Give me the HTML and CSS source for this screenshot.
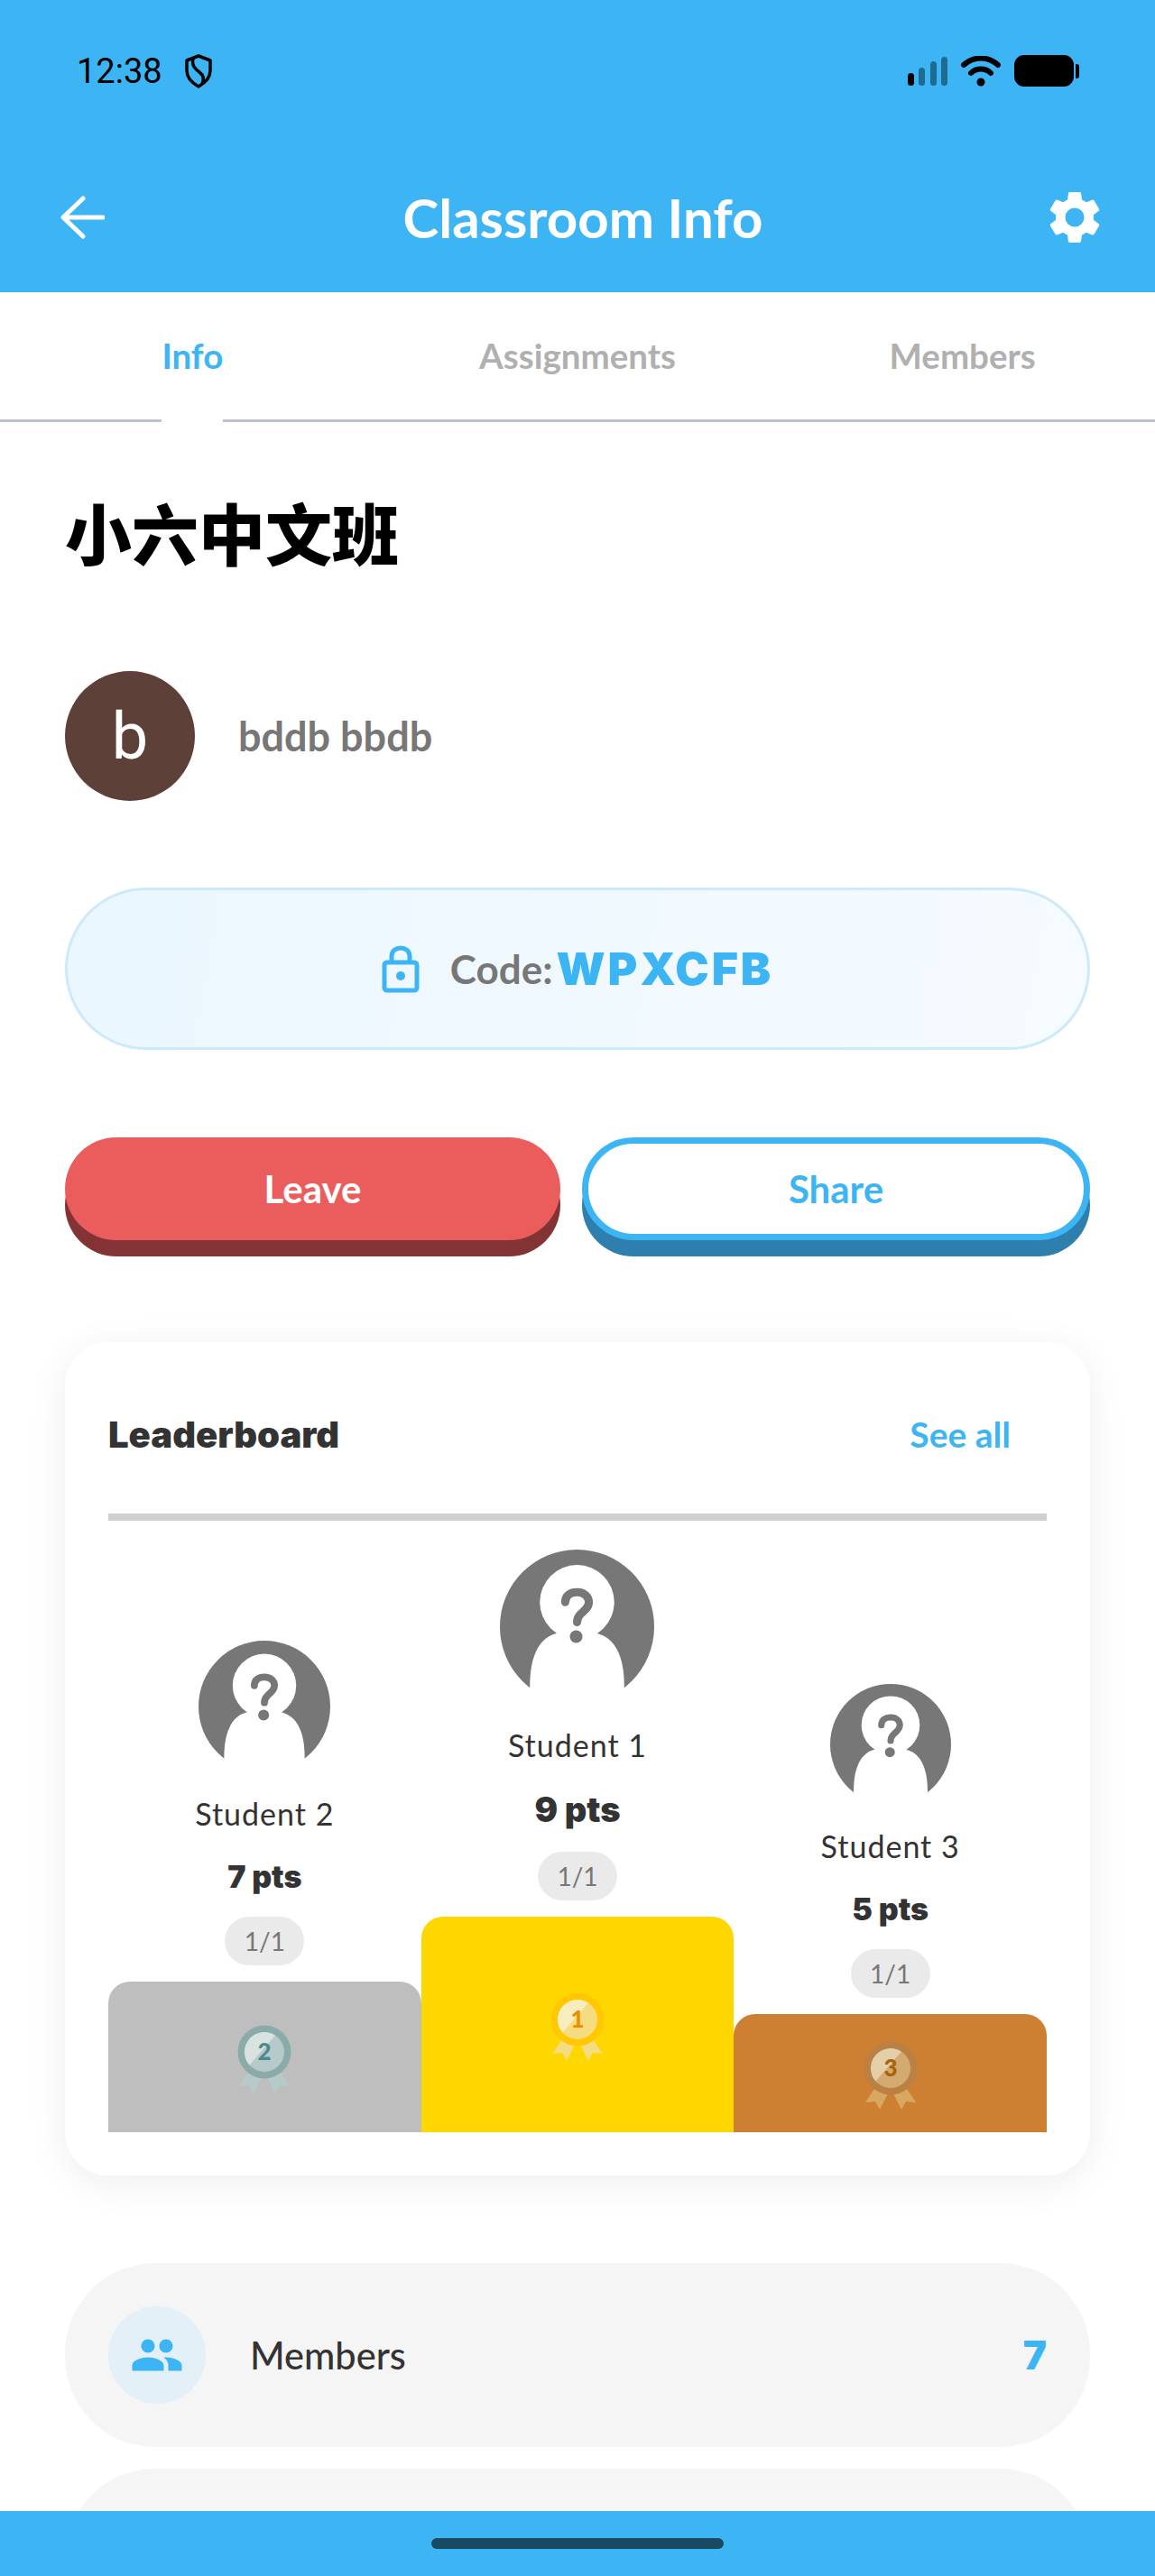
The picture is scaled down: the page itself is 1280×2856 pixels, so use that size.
FILE: index.html

```html
<!DOCTYPE html>
<html lang="en">
<head>
<meta charset="utf-8"/>
<meta content="width=device-width, initial-scale=1.0" name="viewport"/>
<title>Classroom Info</title>
<link rel="stylesheet" href="styles.css">
</head>
<body>
<svg class="defs" width="0" height="0" aria-hidden="true">
  <defs>
    <clipPath id="medalLight"><polygon points="0,60 52,0 0,0"/></clipPath>
    <symbol id="unknownUser" viewBox="0 0 170 170">
      <circle cx="85" cy="85" r="85" fill="#777"/>
      <circle cx="85" cy="58" r="41" fill="#fff"/>
      <path d="M64 92C44 96 33 116 33 151L33 172L137 172L137 151C137 116 126 96 105 92Z" fill="#fff"/>
      <path d="M72 58C72 50 78 47 85 47C93 47 98 52 98 58C98 64 93 67 89 71C86 74 85 76 85 80" fill="none" stroke="#777" stroke-width="9" stroke-linecap="round"/>
      <circle cx="84" cy="96" r="7" fill="#777"/>
    </symbol>
  </defs>
</svg>

<div class="app">
  <header class="top">
    <div class="status">
      <div class="status-left">
        <span class="clock">12:38</span>
        <svg width="32" height="38" viewBox="0 0 32 38"><path d="M16 2L29 7V18C29 26 23 32 16 36C9 32 3 26 3 18V7Z" fill="none" stroke="#000" stroke-width="3.5" stroke-linejoin="round"/><path d="M10 5C8 13 13 17 17 20C21 23 23 27 20 33" fill="none" stroke="#000" stroke-width="3.5"/></svg>
      </div>
      <div class="status-right">
        <div class="signal">
          <span class="bar bar1"></span><span class="bar bar2"></span><span class="bar bar3"></span><span class="bar bar4"></span>
        </div>
        <svg width="44" height="34" viewBox="0 0 44 34"><path d="M3 10C14 0 30 0 41 10" fill="none" stroke="#000" stroke-width="6" stroke-linecap="round"/><path d="M11 19C17 13 27 13 33 19" fill="none" stroke="#000" stroke-width="6" stroke-linecap="round"/><circle cx="22" cy="29" r="4.5" fill="#000"/></svg>
        <div class="battery"><span class="battery-body"></span><span class="battery-tip"></span></div>
      </div>
    </div>
    <div class="nav">
      <svg class="nav-back" width="50" height="48" viewBox="0 0 50 48"><path d="M26 3L4 24L26 45M5 24H48" fill="none" stroke="#fff" stroke-width="5" stroke-linecap="round" stroke-linejoin="round"/></svg>
      <h2>Classroom Info</h2>
      <svg class="nav-gear" width="70" height="70" viewBox="0 0 24 24"><path fill="#fff" d="M19.14 12.94c.04-.3.06-.61.06-.94 0-.32-.02-.64-.07-.94l2.03-1.58a.49.49 0 0 0 .12-.61l-1.92-3.32a.49.49 0 0 0-.59-.22l-2.39.96a7 7 0 0 0-1.62-.94l-.36-2.54a.48.48 0 0 0-.48-.41h-3.84a.48.48 0 0 0-.47.41l-.36 2.54c-.59.24-1.13.57-1.62.94l-2.39-.96a.49.49 0 0 0-.59.22L2.74 8.87a.48.48 0 0 0 .12.61l2.03 1.58c-.05.3-.09.63-.09.94s.02.64.07.94l-2.03 1.58a.49.49 0 0 0-.12.61l1.92 3.32c.12.22.37.29.59.22l2.39-.96c.5.38 1.03.7 1.62.94l.36 2.54c.05.24.24.41.48.41h3.84c.24 0 .44-.17.47-.41l.36-2.54c.59-.24 1.13-.56 1.62-.94l2.39.96c.22.08.47 0 .59-.22l1.92-3.32a.48.48 0 0 0-.12-.61l-2.01-1.58zM12 15.6A3.6 3.6 0 1 1 12 8.4a3.6 3.6 0 0 1 0 7.2z"/></svg>
    </div>
  </header>

  <nav class="tabs">
    <div class="tab active"><span>Info</span></div>
    <div class="tab"><span>Assignments</span></div>
    <div class="tab"><span>Members</span></div>
  </nav>

  <main class="content">
    <h1 class="class-name">小六中文班</h1>

    <div class="teacher">
      <div class="teacher-avatar">b</div>
      <span class="teacher-name">bddb bbdb</span>
    </div>

    <div class="code-pill">
      <svg width="42" height="54" viewBox="0 0 42 54"><rect x="3" y="20" width="36" height="31" rx="3" fill="none" stroke="#3db5f5" stroke-width="5"/><path d="M11 20V13C11 1 31 1 31 13V20" fill="none" stroke="#3db5f5" stroke-width="5"/><circle cx="21" cy="35" r="5" fill="#3db5f5"/></svg>
      <span class="code-label">Code:</span>
      <span class="code-value">WPXCFB</span>
    </div>

    <div class="actions">
      <button class="btn btn-leave">Leave</button>
      <button class="btn btn-share">Share</button>
    </div>

    <section class="card">
      <div class="card-head">
        <span class="card-title">Leaderboard</span>
        <span class="see-all">See all</span>
      </div>
      <div class="podium">
        <div class="place place-2">
          <svg class="face"><use href="#unknownUser"/></svg>
          <div class="student">Student 2</div>
          <div class="pts">7 pts</div>
          <div class="done">1/1</div>
          <div class="block">
            <svg class="medal" width="60" height="72" viewBox="0 0 60 72">
              <polygon class="ribbon" points="14,50 2,68 13,67 18,76 28,56"/>
              <polygon class="ribbon" points="46,50 58,68 47,67 42,76 32,56"/>
              <circle class="ring" cx="30" cy="30" r="29.5"/>
              <circle class="disc" cx="30" cy="30" r="22"/>
              <circle class="shine" cx="30" cy="30" r="22" clip-path="url(#medalLight)"/>
              <text class="num" x="30" y="39">2</text>
            </svg>
          </div>
        </div>
        <div class="place place-1">
          <svg class="face"><use href="#unknownUser"/></svg>
          <div class="student">Student 1</div>
          <div class="pts">9 pts</div>
          <div class="done">1/1</div>
          <div class="block">
            <svg class="medal" width="60" height="72" viewBox="0 0 60 72">
              <polygon class="ribbon" points="14,50 2,68 13,67 18,76 28,56"/>
              <polygon class="ribbon" points="46,50 58,68 47,67 42,76 32,56"/>
              <circle class="ring" cx="30" cy="30" r="29.5"/>
              <circle class="disc" cx="30" cy="30" r="22"/>
              <circle class="shine" cx="30" cy="30" r="22" clip-path="url(#medalLight)"/>
              <text class="num" x="30" y="39">1</text>
            </svg>
          </div>
        </div>
        <div class="place place-3">
          <svg class="face"><use href="#unknownUser"/></svg>
          <div class="student">Student 3</div>
          <div class="pts">5 pts</div>
          <div class="done">1/1</div>
          <div class="block">
            <svg class="medal" width="60" height="72" viewBox="0 0 60 72">
              <polygon class="ribbon" points="14,50 2,68 13,67 18,76 28,56"/>
              <polygon class="ribbon" points="46,50 58,68 47,67 42,76 32,56"/>
              <circle class="ring" cx="30" cy="30" r="29.5"/>
              <circle class="disc" cx="30" cy="30" r="22"/>
              <circle class="shine" cx="30" cy="30" r="22" clip-path="url(#medalLight)"/>
              <text class="num" x="30" y="39">3</text>
            </svg>
          </div>
        </div>
      </div>
    </section>

    <div class="stat-row">
      <div class="stat-icon">
        <svg width="60" height="60" viewBox="0 0 24 24"><path fill="#3db5f5" d="M16 11c1.66 0 2.99-1.34 2.99-3S17.66 5 16 5s-3 1.34-3 3 1.34 3 3 3zm-8 0c1.66 0 2.99-1.34 2.99-3S9.66 5 8 5 5 6.34 5 8s1.34 3 3 3zm0 2c-2.33 0-7 1.17-7 3.5V19h14v-2.5C15 14.17 10.33 13 8 13zm8 0c-.29 0-.62.02-.97.05 1.16.84 1.97 1.97 1.97 3.45V19h6v-2.5c0-2.33-4.67-3.5-7-3.5z"/></svg>
      </div>
      <span class="stat-label">Members</span>
      <span class="stat-value">7</span>
    </div>
    <div class="stat-row"></div>
  </main>

  <footer class="home-bar"><span class="handle"></span></footer>
</div>
</body>
</html>
```

FILE: styles.css

```css
:root {
  --blue: #3db5f5;
  --ink: #333;
  --grey: #777;
  --heavy: Inter, Lato, sans-serif;
}
* {
  box-sizing: border-box;
}
body {
  margin: 0;
  font-family: Lato, "Noto Sans", sans-serif;
  background: #fff;
  color: var(--ink);
}
.defs {
  position: absolute;
}
.app {
  height: 2856px;
  display: flex;
  flex-direction: column;
  overflow: hidden;
}

/* header */
.top {
  height: 324px;
  flex-shrink: 0;
  background: var(--blue);
  padding: 60px 54px 0 66px;
}
.status {
  height: 37px;
  display: flex;
  justify-content: space-between;
  align-items: center;
  padding: 0 30px 0 19px;
}
.status-left {
  display: flex;
  align-items: center;
  gap: 24px;
}
.clock {
  font-family: Roboto, sans-serif;
  font-size: 38px;
  color: #000;
}
.status-right {
  display: flex;
  align-items: center;
  gap: 15px;
}
.signal {
  display: flex;
  align-items: flex-end;
  gap: 5.5px;
  height: 32px;
}
.bar {
  width: 7px;
  border-radius: 4px;
  background: #1f6a90;
}
.bar1 { height: 14px; background: #000; }
.bar2 { height: 20px; }
.bar3 { height: 27px; }
.bar4 { height: 32px; }
.battery {
  display: flex;
  align-items: center;
  gap: 2px;
}
.battery-body {
  width: 66px;
  height: 35px;
  border-radius: 11px;
  background: #000;
}
.battery-tip {
  width: 4px;
  height: 16px;
  border-radius: 0 3px 3px 0;
  background: #000;
}
.nav {
  display: grid;
  grid-template-columns: 1fr auto 1fr;
  align-items: center;
  margin-top: 108px;
  height: 70px;
}
.nav-gear {
  justify-self: end;
}
.nav h2 {
  margin: 0;
  color: #fff;
  font-size: 60px;
  font-weight: 700;
}

/* tabs */
.tabs {
  height: 144px;
  flex-shrink: 0;
  display: grid;
  grid-template-columns: repeat(3, 1fr);
  border-bottom: 3px solid #bcc1cb;
}
.tab {
  display: flex;
  justify-content: center;
  font-size: 38.5px;
  font-weight: 700;
  color: #b0b0b0;
}
.tab span {
  height: 144px;
  padding-top: 47px;
  line-height: 46px;
}
.tab.active {
  color: var(--blue);
}
.tab.active span {
  border-bottom: 3px solid #fff;
}

/* content */
.content {
  flex: 1;
  overflow: hidden;
  padding: 0 72px;
}
.class-name {
  margin: 71px 0 0;
  height: 100px;
  line-height: 100px;
  font-family: "Noto Sans CJK SC", sans-serif;
  font-size: 74px;
  font-weight: 900;
  color: #000;
}
.teacher {
  display: flex;
  align-items: center;
  gap: 48px;
  margin-top: 105px;
}
.teacher-avatar {
  width: 144px;
  height: 144px;
  border-radius: 50%;
  background: #5d4037;
  color: #fff;
  font-family: Roboto, sans-serif;
  font-size: 72px;
  display: flex;
  align-items: center;
  justify-content: center;
}
.teacher-name {
  font-size: 45px;
  font-weight: 700;
  color: var(--grey);
}
.code-pill {
  height: 180px;
  margin-top: 96px;
  border: 3px solid #cdeafb;
  border-radius: 90px;
  background: linear-gradient(100deg, #eaf7fe, #f6fbff);
  display: flex;
  align-items: center;
  justify-content: center;
}
.code-label {
  margin-left: 34px;
  font-size: 44px;
  font-weight: 700;
  color: var(--grey);
}
.code-value {
  margin-left: 4px;
  font-family: var(--heavy);
  font-size: 50px;
  font-weight: 900;
  letter-spacing: 3px;
  color: var(--blue);
}
.actions {
  display: flex;
  gap: 24px;
  margin-top: 97px;
}
.btn {
  flex: 1 1 0;
  height: 114px;
  margin-bottom: 18px;
  padding: 0;
  border: 0;
  border-radius: 58px;
  font-family: inherit;
  font-size: 42px;
  font-weight: 700;
}
.btn-leave {
  background: #eb5c5c;
  color: #fff;
  box-shadow: 0 18px 0 #833333;
}
.btn-share {
  background: #fff;
  color: var(--blue);
  border: 7px solid var(--blue);
  box-shadow: 0 18px 0 #2e7fae;
}

/* leaderboard */
.card {
  margin-top: 95px;
  height: 924px;
  padding: 0 48px 48px;
  border-radius: 48px;
  background: #fff;
  box-shadow: 0 8px 44px rgba(0, 0, 0, 0.07);
  display: flex;
  flex-direction: column;
  justify-content: space-between;
}
.card-head {
  height: 198px;
  display: flex;
  justify-content: space-between;
  align-items: center;
  padding: 14px 40px 0 0;
  border-bottom: 8px solid #d0d0d0;
}
.card-title {
  font-family: var(--heavy);
  font-size: 40px;
  font-weight: 900;
}
.see-all {
  font-size: 39px;
  font-weight: 700;
  color: var(--blue);
}
.podium {
  display: grid;
  grid-template-columns: repeat(3, 1fr);
  align-items: end;
}
.place {
  display: flex;
  flex-direction: column;
  align-items: center;
}
.face {
  display: block;
}
.place-1 .face { width: 171px; height: 171px; }
.place-2 .face { width: 146px; height: 146px; }
.place-3 .face { width: 134px; height: 134px; }
.student {
  margin-top: 24px;
  font-size: 34px;
  line-height: 44px;
  letter-spacing: 1px;
}
.pts {
  margin-top: 24px;
  font-family: var(--heavy);
  font-size: 36px;
  line-height: 48px;
  font-weight: 900;
}
.place-1 .pts {
  margin-top: 22px;
  font-size: 38px;
  line-height: 54px;
}
.place-2 .pts,
.place-3 .pts {
  font-size: 34px;
}
.done {
  width: 88px;
  height: 54px;
  margin: 20px 0 18px;
  border-radius: 27px;
  background: #eaeaea;
  color: var(--grey);
  font-size: 28px;
  line-height: 54px;
  text-align: center;
}
.block {
  width: 100%;
  border-radius: 24px 24px 0 0;
  display: flex;
  align-items: center;
  justify-content: center;
}
.place-1 .block { height: 239px; background: #ffd700; }
.place-2 .block { height: 167px; background: #bebebe; }
.place-3 .block { height: 131px; background: #cd7f32; }
.medal {
  overflow: visible;
}
.num {
  font-family: Lato, sans-serif;
  font-size: 26px;
  font-weight: 900;
  text-anchor: middle;
}
.place-1 .ring { fill: #ffc800; }
.place-1 .disc, .place-1 .ribbon { fill: #f5dc7e; }
.place-1 .shine { fill: #f8edbf; }
.place-1 .num { fill: #ea8f00; }
.place-2 .ring { fill: #8aabaa; }
.place-2 .disc, .place-2 .ribbon { fill: #b6cbc9; }
.place-2 .shine { fill: #d8e3e1; }
.place-2 .num { fill: #4d8a8e; }
.place-3 .ring { fill: #bb8044; }
.place-3 .disc { fill: #d3ab70; }
.place-3 .ribbon { fill: #d9a860; }
.place-3 .shine { fill: #e4cfab; }
.place-3 .num { fill: #a8620e; }

/* rows */
.stat-row {
  height: 204px;
  margin-top: 24px;
  padding: 0 48px;
  border-radius: 100px;
  background: #f5f5f5;
  display: flex;
  align-items: center;
}
.card + .stat-row {
  margin-top: 97px;
}
.stat-icon {
  width: 108px;
  height: 108px;
  border-radius: 50%;
  background: #e3f0f7;
  display: flex;
  align-items: center;
  justify-content: center;
}
.stat-label {
  margin-left: 49px;
  font-size: 41.5px;
  font-weight: 500;
}
.stat-value {
  margin-left: auto;
  font-family: var(--heavy);
  font-size: 44px;
  font-weight: 900;
  color: var(--blue);
}
.home-bar {
  height: 72px;
  flex-shrink: 0;
  background: var(--blue);
  display: flex;
  justify-content: center;
  padding-top: 30px;
}
.handle {
  width: 324px;
  height: 12px;
  border-radius: 6px;
  background: #1a4a62;
}
```
